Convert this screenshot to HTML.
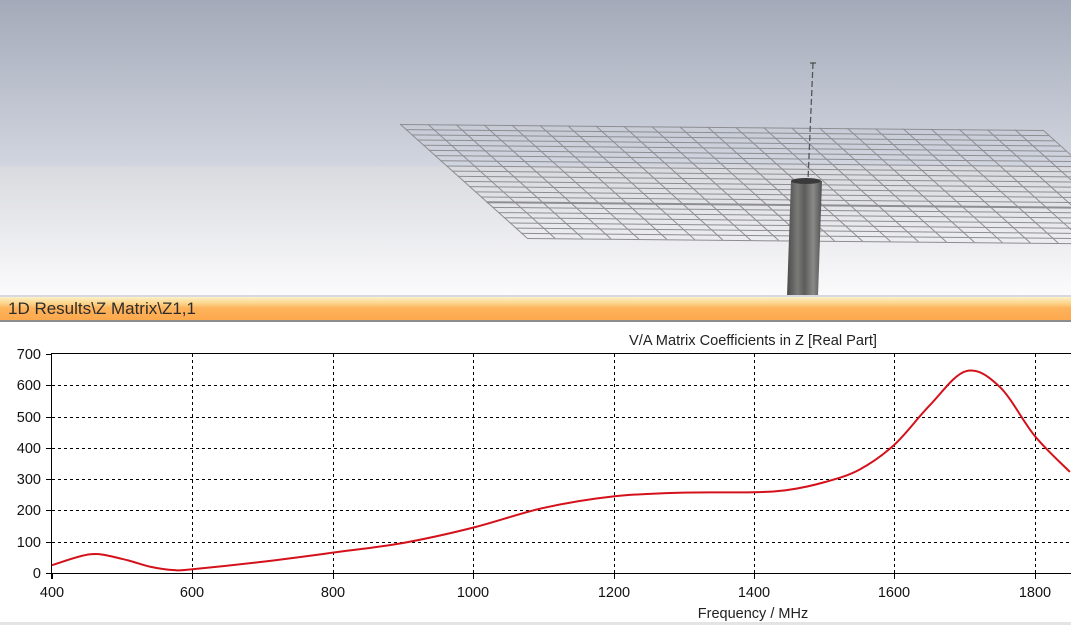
<!DOCTYPE html>
<html><head><meta charset="utf-8">
<style>
html,body{margin:0;padding:0;width:1071px;height:625px;overflow:hidden;background:#fff;font-family:"Liberation Sans",Tahoma,sans-serif}
#top{position:absolute;left:0;top:0;width:1071px;height:296px;background:linear-gradient(#a4aab9 0px,#d1d5df 165px,#d9dadf 167px,#fbfbfc 295px)}
#sep{position:absolute;left:0;top:295px;width:1071px;height:2px;background:#d8d8e0}
#bar{position:absolute;left:0;top:297px;width:1071px;height:25px;background:linear-gradient(#fbf1c8 0px,#fcd68e 6px,#fdb35c 11px,#fda84c 24px);border-bottom:2px solid #8d8d8d;box-sizing:border-box;font-size:17px;color:#2c2c2c;padding-left:8px;line-height:24px}
#bot{position:absolute;left:0;top:622px;width:1071px;height:3px;background:#e4e4e4}
svg{position:absolute;left:0;top:0}
</style></head><body>
<div id="top"></div>
<div id="sep"></div>
<div id="bar">1D Results\Z Matrix\Z1,1</div>
<div id="bot"></div>
<svg id="s" width="1071" height="625" xmlns="http://www.w3.org/2000/svg">
<defs>
<linearGradient id="cyl" x1="0" x2="1" y1="0" y2="0">
<stop offset="0" stop-color="#4a4a4a"/><stop offset="0.3" stop-color="#7a7a78"/><stop offset="0.5" stop-color="#5c5c5a"/><stop offset="0.75" stop-color="#8a8a88"/><stop offset="1" stop-color="#505050"/>
</linearGradient>
<clipPath id="topclip"><rect x="0" y="0" width="1071" height="295"/></clipPath>
</defs>
<g id="mesh" stroke="#8e8e92" stroke-width="1" fill="none" clip-path="url(#topclip)"></g>
<g clip-path="url(#topclip)">
<polygon points="791,181 822,181 818,296 787,296" fill="url(#cyl)"/>
<ellipse cx="806" cy="181" rx="15" ry="3" fill="#3a3a3a"/>
<line x1="813" y1="63" x2="808" y2="180" stroke="#555" stroke-width="1.3" stroke-dasharray="6,3"/>
<line x1="810" y1="63" x2="816" y2="63" stroke="#333"/>
</g>
<text x="753" y="345" font-size="14.6" text-anchor="middle" fill="#222">V/A Matrix Coefficients in Z [Real Part]</text>
<g id="grid" stroke="#000" stroke-width="1" stroke-dasharray="3,3"></g>
<line x1="51.5" y1="353.5" x2="1071" y2="353.5" stroke="#000"/>
<line x1="51.5" y1="353" x2="51.5" y2="579" stroke="#000"/>
<line x1="46" y1="573.5" x2="1071" y2="573.5" stroke="#000"/>
<g id="lbl" font-size="14.5" fill="#111"></g>
<text x="753" y="618" font-size="14.5" text-anchor="middle" fill="#222">Frequency / MHz</text>
<path id="curve" fill="none" stroke="#d4111a" stroke-width="2"/>
</svg>
<script>
var NS="http://www.w3.org/2000/svg";
function el(p,t,a,txt){var e=document.createElementNS(NS,t);for(var k in a)e.setAttribute(k,a[k]);if(txt)e.textContent=txt;p.appendChild(e);return e;}
var m=document.getElementById('mesh');
var TL=[400,124],TR=[1043,130],BL=[527,238],BR=[1170,244];
var nh=22;
for(var i=0;i<=nh;i++){var t=i/nh;
 var a=[TL[0]+(BL[0]-TL[0])*t,TL[1]+(BL[1]-TL[1])*t],b=[TR[0]+(BR[0]-TR[0])*t,TR[1]+(BR[1]-TR[1])*t];
 el(m,'line',{x1:a[0],y1:a[1]+0.5,x2:b[0],y2:b[1]+0.5,'stroke-width':(i==15?2:1)});}
var nv=23;
for(var i=0;i<=nv;i++){var t=i/nv;
 var a=[TL[0]+(TR[0]-TL[0])*t,TL[1]+(TR[1]-TL[1])*t],b=[BL[0]+(BR[0]-BL[0])*t,BL[1]+(BR[1]-BL[1])*t];
 el(m,'line',{x1:a[0],y1:a[1],x2:b[0],y2:b[1]});}
function X(f){return 52+(f-400)*0.702;}
function Y(v){return 573-v*0.3129;}
var g=document.getElementById('grid'),L=document.getElementById('lbl');
for(var f=600;f<=1800;f+=200){var x=Math.round(X(f))+0.5;el(g,'line',{x1:x,y1:354,x2:x,y2:573});}
for(var v=100;v<=600;v+=100){var y=Math.round(Y(v))+0.5;el(g,'line',{x1:52,y1:y,x2:1071,y2:y});}
for(var v=0;v<=700;v+=100){var y=Math.round(Y(v));el(L,'line',{x1:46,y1:y+0.5,x2:52,y2:y+0.5,stroke:'#000'});el(L,'text',{x:41,y:y+5,'text-anchor':'end'},''+v);}
for(var f=400;f<=1800;f+=200){var x=Math.round(X(f));el(L,'line',{x1:x+0.5,y1:573,x2:x+0.5,y2:579,stroke:'#000'});el(L,'text',{x:x,y:597,'text-anchor':'middle'},''+f);}
var P=[[400,25],[455,60],[500,45],[540,20],[575,9],[600,12],[700,36],[800,65],[900,96],[1000,145],[1100,208],[1200,245],[1300,257],[1400,258],[1450,266],[1500,290],[1550,330],[1600,410],[1650,535],[1702,645],[1750,595],[1800,438],[1850,323]];
var pts=P.map(function(p){return [X(p[0]),Y(p[1])];});
var d='M'+pts[0][0]+','+pts[0][1];
for(var i=0;i<pts.length-1;i++){var p0=pts[Math.max(0,i-1)],p1=pts[i],p2=pts[i+1],p3=pts[Math.min(pts.length-1,i+2)];
 d+=' C'+(p1[0]+(p2[0]-p0[0])/6)+','+(p1[1]+(p2[1]-p0[1])/6)+' '+(p2[0]-(p3[0]-p1[0])/6)+','+(p2[1]-(p3[1]-p1[1])/6)+' '+p2[0]+','+p2[1];}
document.getElementById('curve').setAttribute('d',d);
</script>
</body></html>
